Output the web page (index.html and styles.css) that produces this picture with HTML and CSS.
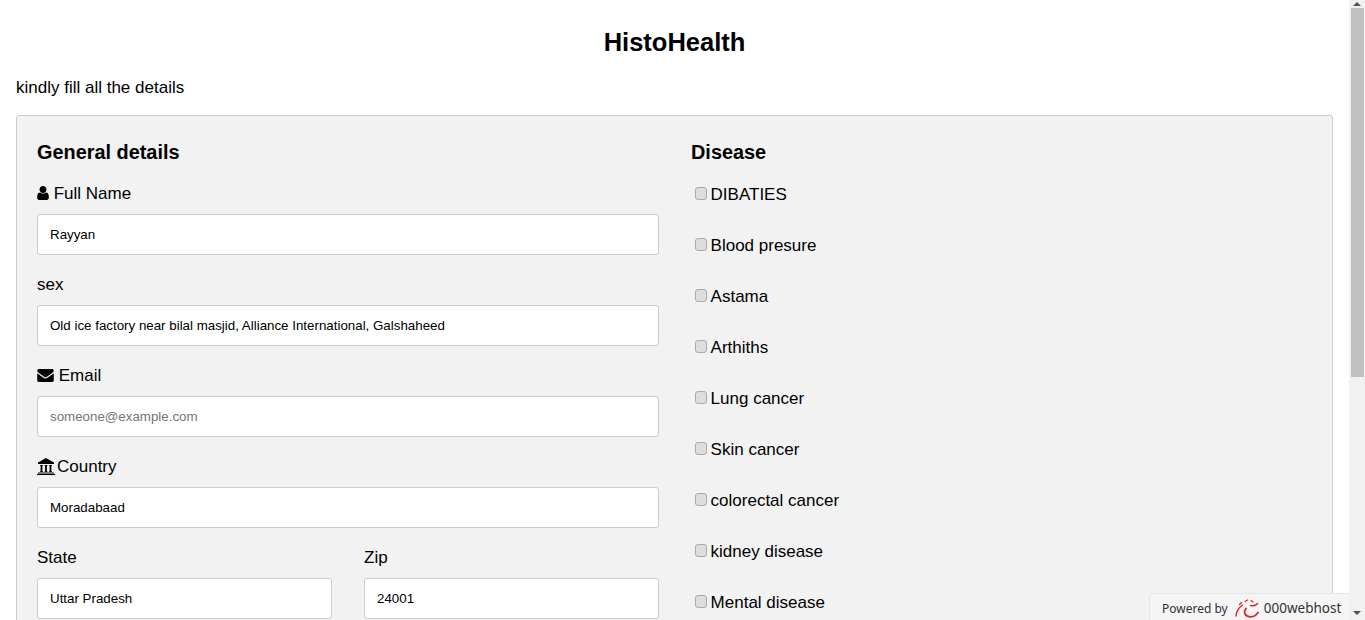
FILE: index.html
```html
<!DOCTYPE html>
<html lang="en">
<head>
<meta charset="utf-8">
<title>HistoHealth</title>
<link rel="stylesheet" href="styles.css">
</head>
<body>
<div class="viewport">
  <main class="page">
    <h1 class="title">HistoHealth</h1>
    <p class="intro">kindly fill all the details</p>
    <form class="card">
      <section class="col">
        <h3 class="heading">General details</h3>
        <div class="field">
          <label class="label"><svg class="icon icon-user" viewBox="256 128 1280 1536"><path d="M1536 1399q0 109-62.5 187t-150.5 78h-854q-88 0-150.5-78t-62.5-187q0-85 8.5-160.5t31.5-151.5 58.500-130 94-88.500 134.500-34.500q131 128 313 128t313-128q76 0 134.500 34.500t94 88.500 58.500 130 31.500 151.500 8.500 160.500zm-256-887q0 159-112.500 271.500t-271.500 112.500-271.500-112.500-112.500-271.500 112.500-271.500 271.500-112.500 271.500 112.500 112.500 271.500z"/></svg> Full Name</label>
          <input class="input" type="text" value="Rayyan">
        </div>
        <div class="field">
          <label class="label">sex</label>
          <input class="input" type="text" value="Old ice factory near bilal masjid, Alliance International, Galshaheed">
        </div>
        <div class="field">
          <label class="label"><svg class="icon icon-mail" viewBox="0 256 1792 1408"><path d="M1792 710v794q0 66-47 113t-113 47h-1472q-66 0-113-47t-47-113v-794q44 49 101 87 362 246 497 345 57 42 92.500 65.500t94.500 48 110 24.500h2q51 0 110-24.500t94.500-48 92.500-65.500q170-123 498-345 57-39 100-87zm0-294q0 79-49 151t-122 123q-376 261-468 325-10 7-42.500 30.500t-54 38-52 32.500-57.500 27-50 9h-2q-23 0-50-9t-57.500-27-52-32.500-54-38-42.500-30.500q-91-64-262-182.500t-205-142.500q-62-42-117-115.500t-55-136.500q0-78 41.500-130t118.500-52h1472q65 0 112.500 47t47.500 113z"/></svg> Email</label>
          <input class="input" type="text" placeholder="someone@example.com">
        </div>
        <div class="field">
          <label class="label"><svg class="icon icon-bank" viewBox="0 0 18 17"><path d="M9 0 17 4.500V6H1V4.500z"/><path d="M3 7h3v.8h-.6v5.400H6v.8H3v-.8h.6V7.800H3zM7.500 7h3v.8h-.6v5.400h.6v.8h-3v-.8h.6V7.800h-.6zM12 7h3v.8h-.6v5.400h.6v.8h-3v-.8h.6V7.800H12z"/><path d="M1 14.500h16V15.500H1zM0 16h18v1H0z"/></svg>Country</label>
          <input class="input" type="text" value="Moradabaad">
        </div>
        <div class="split">
          <div class="field">
            <label class="label">State</label>
            <input class="input" type="text" value="Uttar Pradesh">
          </div>
          <div class="field">
            <label class="label">Zip</label>
            <input class="input" type="text" value="24001">
          </div>
        </div>
      </section>
      <section class="col">
        <h3 class="heading">Disease</h3>
        <label class="check"><input class="box" type="checkbox" disabled>DIBATIES</label>
        <label class="check"><input class="box" type="checkbox" disabled>Blood presure</label>
        <label class="check"><input class="box" type="checkbox" disabled>Astama</label>
        <label class="check"><input class="box" type="checkbox" disabled>Arthiths</label>
        <label class="check"><input class="box" type="checkbox" disabled>Lung cancer</label>
        <label class="check"><input class="box" type="checkbox" disabled>Skin cancer</label>
        <label class="check"><input class="box" type="checkbox" disabled>colorectal cancer</label>
        <label class="check"><input class="box" type="checkbox" disabled>kidney disease</label>
        <label class="check"><input class="box" type="checkbox" disabled>Mental disease</label>
      </section>
    </form>
    <div class="badge">
      <span class="badge-text">Powered by</span>
      <svg class="badge-logo" viewBox="0 0 24 20" fill="none" stroke="#d8262c" stroke-linecap="round">
        <path d="M1 18C1.500 13 4 9.500 7.500 7" stroke-width="1.400"/>
        <path d="M23 14.500c-2.500 4-7 5-10.500 3.700C9.500 17 8.500 13.500 11 10.500" stroke-width="1.800"/>
        <path d="M22.500 5.500c-1.500 2-4 2.800-7 2" stroke-width="1.500"/>
        <path d="M16 2.500 18 4" stroke-width="1.200"/>
        <path d="M10 3.500 12.500 2" stroke-width="1.200"/>
        <path d="M4.500 6.500 6.500 4.500" stroke-width="1.200"/>
      </svg>
      <span class="badge-brand">000webhost</span>
    </div>
  </main>
  <aside class="scrollbar">
    <span class="arrow arrow-up"></span>
    <span class="thumb"></span>
    <span class="arrow arrow-down"></span>
  </aside>
</div>
</body>
</html>
```
FILE: styles.css
```css
* { box-sizing: border-box; }
html, body { margin: 0; padding: 0; height: 620px; overflow: hidden; background: #fff; }
body { font-family: "Liberation Sans", Arial, sans-serif; color: #000; font-size: 17px; }
.viewport { display: flex; height: 620px; overflow: hidden; }
.page { position: relative; width: 1349px; height: 620px; overflow: hidden; padding: 0 16px; flex: none; }
.title { margin: 0; padding-top: 27px; height: 70px; text-align: center; font-size: 25.5px; line-height: 30px; font-weight: 700; }
.intro { margin: 0; height: 45px; font-size: 17px; line-height: 35px; }
.card { display: grid; grid-template-columns: 622px 622px; column-gap: 32px; padding: 21px 20px 20px; width: 1317px; height: 800px; background: #f2f2f2; border: 1px solid #ccc; border-radius: 3px; }
.col { display: flex; flex-direction: column; align-items: stretch; }
.heading { margin: 0 0 14px; font-size: 19.89px; line-height: 30px; font-weight: 700; }
.field { display: flex; flex-direction: column; margin-bottom: 17px; }
.label { display: block; height: 33px; font-size: 17px; line-height: 26px; }
.input { display: block; width: 100%; height: 41px; padding: 0 12px; font: 13.33px "Liberation Sans", Arial, sans-serif; color: #000; background: #fff; border: 1px solid #ccc; border-radius: 3px; outline: none; }
.input::placeholder { color: #757575; opacity: 1; }
.split { display: grid; grid-template-columns: 295px 295px; column-gap: 32px; }
.icon { display: inline-block; fill: #000; }
.icon-user { width: 12px; height: 14px; vertical-align: -1px; }
.icon-mail { width: 17px; height: 13px; vertical-align: -1px; }
.icon-bank { width: 18px; height: 17px; margin-right: 2px; vertical-align: -3px; }
.check { display: flex; align-items: center; height: 24px; margin: 2px 0 25px; padding-left: 4px; font-size: 17px; line-height: 24px; }
.box { appearance: none; -webkit-appearance: none; flex: none; width: 12px; height: 13px; margin: -3px 3.6px 0 0; background: #ddd; border: 1px solid #aaa; border-radius: 3px; }
.badge { position: absolute; right: 0; bottom: 0; width: 200px; height: 27px; display: flex; align-items: center; padding: 2px 0 0 12px; background: #f5f5f5; border: 1px solid #e4e4e4; border-width: 1px 0 0 1px; border-radius: 4px 0 0 0; font-family: "Noto Sans", sans-serif; color: #333; }
.badge-text { font-size: 12px; }
.badge-logo { width: 24px; height: 20px; margin-left: 7px; flex: none; }
.badge-brand { margin-left: 5px; font-size: 13.5px; }
.scrollbar { flex: none; width: 16px; height: 620px; background: #f1f1f1; display: flex; flex-direction: column; align-items: center; padding: 0; }
.arrow { flex: none; width: 0; height: 0; border-left: 4px solid transparent; border-right: 4px solid transparent; }
.arrow-up { border-bottom: 4px solid #505050; margin-top: 2px; margin-bottom: 2px; }
.thumb { flex: none; width: 13px; height: 369px; background: #c1c1c1; }
.arrow-down { border-top: 4px solid #505050; margin-top: auto; margin-bottom: 5px; }
```
